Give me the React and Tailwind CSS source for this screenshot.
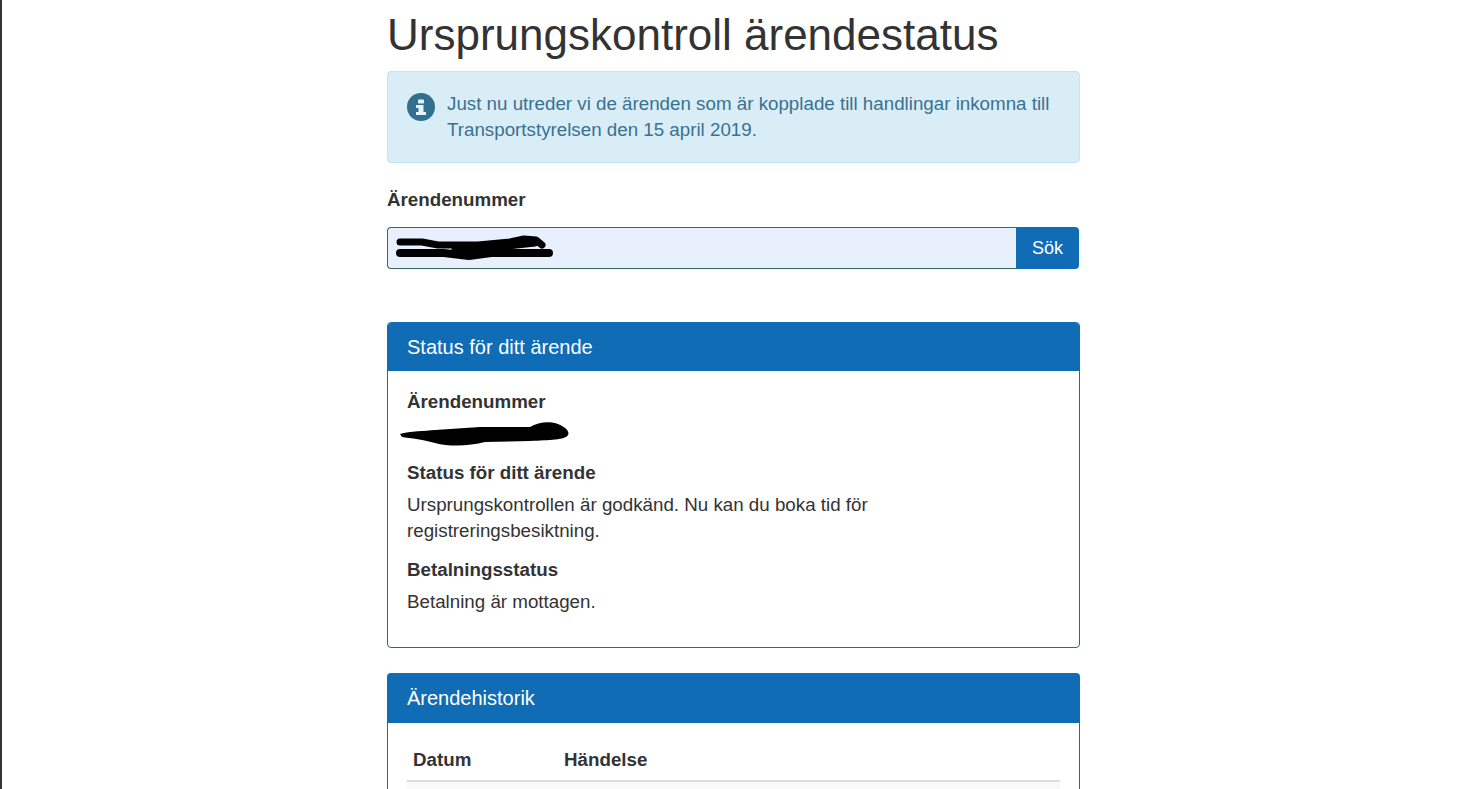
export default function App() {
  return (
    <div className="h-[789px] overflow-hidden bg-white border-l-2 border-[#333] text-[18.75px] leading-[26px] text-[#333]" style={{ fontFamily: '"Liberation Sans", Arial, sans-serif' }}>
      <div className="w-[693px] ml-[385px]">
        <h1 className="text-[44px] leading-[48px] font-normal pt-[11px] mb-[12px]">Ursprungskontroll ärendestatus</h1>

        <div className="flex h-[92px] rounded border border-[#bce8f1] bg-[#d9edf7] pl-[19px] pt-[19px] text-[#3a7191]">
          <svg className="w-[28px] h-[28px] mt-[2px] mr-[12px] shrink-0" viewBox="0 0 28 28">
            <circle cx="14" cy="14" r="14" fill="#31708f" />
            <rect x="11" y="6.5" width="6" height="4" rx="0.8" fill="#e8f3f8" />
            <path d="M9 12h7.5v7h2.5v3h-10v-3h2.5v-4h-2.5z" fill="#e8f3f8" />
          </svg>
          <p>Just nu utreder vi de ärenden som är kopplade till handlingar inkomna till<br />Transportstyrelsen den 15 april 2019.</p>
        </div>

        <label className="block font-bold mt-[24px] mb-[14px]">Ärendenummer</label>
        <div className="relative flex h-[42px] w-[692px]">
          <input readOnly className="flex-1 min-w-0 rounded-l border border-r-0 border-[#3b6b57] bg-[#e8f0fe] outline-none" />
          <button className="w-[63px] rounded-r bg-[#106cb5] text-white text-[18px]">Sök</button>
          <svg className="absolute left-[8px] top-[6px] w-[160px] h-[30px]" viewBox="0 0 160 30" fill="none" stroke="#000" strokeLinecap="round" strokeLinejoin="round">
            <path d="M5 9h22l16 3 40 0 32-3 14-3 12 1 6 5" strokeWidth="7" />
            <path d="M5 20h44l25 3 22-3h58" strokeWidth="8" />
            <path d="M60 17l45-3 35-4" strokeWidth="7" />
          </svg>
        </div>

        <section className="mt-[53px] h-[326px] rounded border border-[#106cb5] overflow-hidden">
          <h2 className="h-[48px] bg-[#106cb5] text-white text-[20px] leading-[48px] font-normal px-[19px]">Status för ditt ärende</h2>
          <div className="px-[19px] pt-[18px]">
            <h3 className="font-bold leading-[26px]">Ärendenummer</h3>
            <div className="relative h-[26px] mb-[19px]">
              <svg className="absolute -left-[7px] top-[6px] w-[170px] h-[26px]" viewBox="0 0 170 26" fill="#000">
                <path d="M0 13C10 10 25 10 35 9L80 6L130 6C138 1 150 0 158 3C165 6 170 10 168 14C165 19 150 19 130 20L85 21C70 25 50 26 35 22C25 19 10 17 2 16Z" />
              </svg>
            </div>
            <h3 className="font-bold mb-[6px]">Status för ditt ärende</h3>
            <p className="w-[520px] mb-[13px]">Ursprungskontrollen är godkänd. Nu kan du boka tid för registreringsbesiktning.</p>
            <h3 className="font-bold mb-[6px]">Betalningsstatus</h3>
            <p>Betalning är mottagen.</p>
          </div>
        </section>

        <section className="mt-[25px] rounded-t border border-b-0 border-[#106cb5] h-[200px]">
          <h2 className="h-[49px] bg-[#106cb5] text-white text-[20px] leading-[48px] font-normal px-[19px]">Ärendehistorik</h2>
          <div className="px-[19px] pt-[24px]">
            <table className="w-full border-collapse">
              <thead>
                <tr className="border-b-2 border-[#ddd]">
                  <th className="w-[151px] text-left font-bold pl-[6px] pb-[7px] leading-[26px]">Datum</th>
                  <th className="text-left font-bold pl-[6px] pb-[7px] leading-[26px]">Händelse</th>
                </tr>
              </thead>
              <tbody>
                <tr className="bg-[#f9f9f9] h-[40px]"><td /><td /></tr>
              </tbody>
            </table>
          </div>
        </section>
      </div>
    </div>
  );
}
